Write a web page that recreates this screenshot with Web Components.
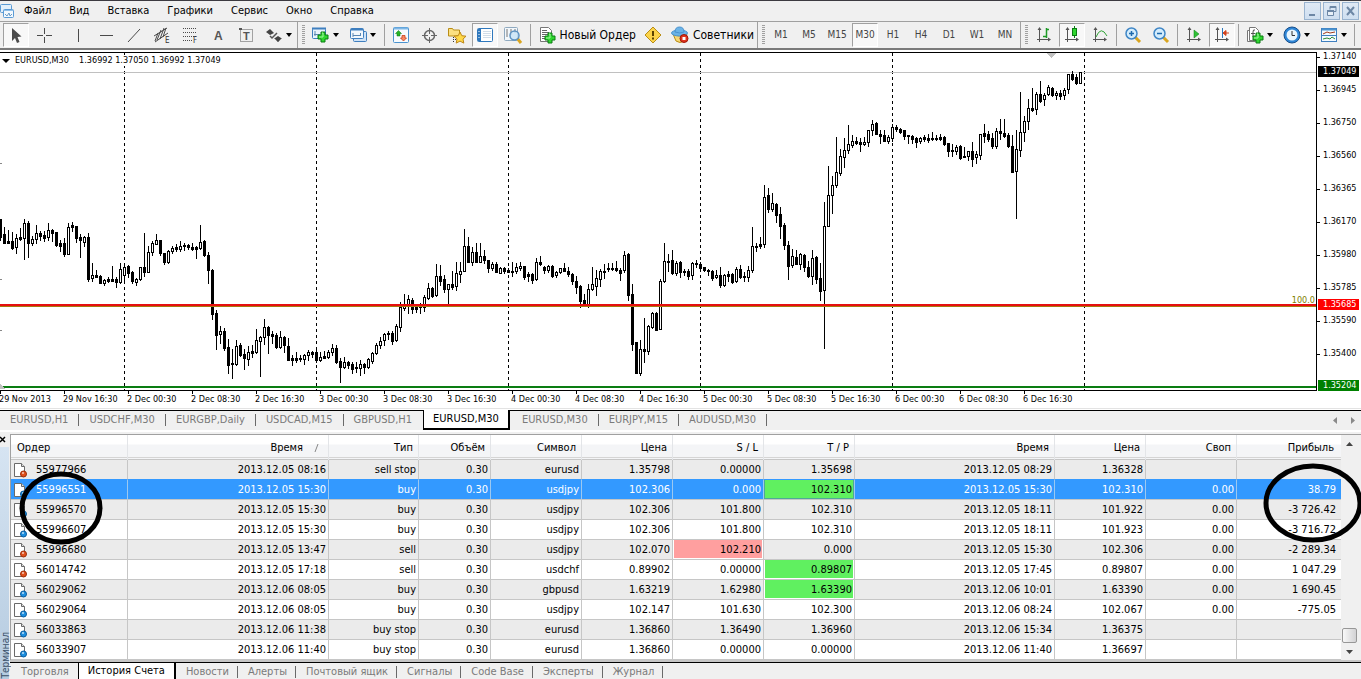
<!DOCTYPE html>
<html lang="ru">
<head>
<meta charset="utf-8">
<title>EURUSD,M30</title>
<style>
  html, body { margin: 0; padding: 0; background: #f0f0f0; }
  body { font: 11px/14px "DejaVu Sans Condensed", "Noto Sans", sans-serif; color: #000; overflow-x: hidden; }
</style>
</head>
<body>
<mt-app></mt-app>

<script>
const NS = (w, h, body) => `<svg width="${w}" height="${h}" viewBox="0 0 ${w} ${h}" aria-hidden="true">${body}</svg>`;
const plusSign = (x, y) => `<path d="M${x+3} ${y}h4v3h3v4h-3v3h-4v-3h-3v-4h3z" fill="#2fd62f" stroke="#0a7d12"/><path d="M${x+4} ${y+1}h1v4h-4" stroke="#a5f7a0" fill="none"/>`;
const axes = `<path d="M5.5 3v14M3 14.5h13" stroke="#555" fill="none"/><path d="M5.5 2l-2 3h4zM17 14.5l-3-2v4z" fill="#555"/>`;
const ICONS = {
  cursor: NS(20, 20, `<path d="M6 3v13l3-3 2 5 2.500-1-2-5 4-.500z" fill="#4a4a4a"/>`),
  cross: NS(20, 20, `<path d="M10.500 3v6M10.500 12v6M3 10.500h6M12 10.500h6" stroke="#4a4a4a"/>`),
  vline: NS(20, 20, `<path d="M10.500 4v13" stroke="#4a4a4a"/>`),
  hline: NS(20, 20, `<path d="M4 10.500h13" stroke="#4a4a4a"/>`),
  diag: NS(20, 20, `<path d="M4 17L16 4" stroke="#4a4a4a"/>`),
  channel: NS(20, 20, `<path d="M2 11L15 3M3 17L16 8M5 15L9 5M8 14L12 3M11 12L14 3M3 16L6 8" stroke="#4a4a4a" fill="none"/><text x="13" y="18" font-size="8" fill="#333">E</text>`),
  fib: NS(20, 20, `<path d="M3 3.500h14M3 7.500h14M3 11.500h14M3 15.500h9" stroke="#4a4a4a" stroke-dasharray="1 1"/><text x="13" y="18" font-size="8" fill="#333">F</text>`),
  letterA: NS(20, 20, `<text x="6" y="15" font-size="12" font-weight="bold" fill="#555" font-family="Liberation Sans">A</text>`),
  letterT: NS(20, 20, `<rect x="4.500" y="4.500" width="12" height="12" fill="none" stroke="#555" stroke-dasharray="1 1"/><path d="M3 3h3v2h-3z" fill="#555"/><text x="7" y="15" font-size="11" font-weight="bold" fill="#555" font-family="Liberation Sans">T</text>`),
  arrows: NS(20, 20, `<path d="M6 4l4 4-4 2-4-3zM14 17l-4-4h8z" fill="#444"/><path d="M6 11l2 2 5-5" stroke="#555" stroke-width="1.500" fill="none"/><path d="M14 11l3 2-3 4-3-4z" fill="#444"/>`),
  newchart: NS(20, 20, `<rect x="1.500" y="3.500" width="13" height="10" rx="1" fill="#e9f3fc" stroke="#3f7fbf"/><path d="M1 3.500h14" stroke="#3f7fbf" stroke-width="2"/><path d="M4 6v5M3 9.500h6" stroke="#5b87b3"/>${plusSign(7, 7)}`),
  profiles: NS(20, 20, `<rect x="5.500" y="6.500" width="13" height="10" rx="1" fill="#cfe2f5" stroke="#3f7fbf"/><rect x="2.500" y="3.500" width="13" height="10" rx="1" fill="#f2f8fd" stroke="#3f7fbf"/><path d="M3 4.500h12" stroke="#3f7fbf" stroke-width="2"/><path d="M5 8v4M5 10.500h8M12.500 8v3" stroke="#5b87b3"/>`),
  market: NS(20, 20, `<rect x="2.500" y="2.500" width="15" height="15" rx="1" fill="#f7fbff" stroke="#4b93cf"/><path d="M3 3.500h14" stroke="#7db7e6" stroke-width="2"/><path d="M7.500 5.500l3 3h-1.500v2.500h-3v-2.500h-1.500z" fill="#28b428" stroke="#0b7a12" stroke-width=".5"/><path d="M12.500 16l-3-3h1.500v-2.500h3v2.500h1.500z" fill="#f88a64" stroke="#c8401a" stroke-width=".8"/>`),
  target: NS(20, 20, `<circle cx="10.500" cy="10.500" r="5" fill="none" stroke="#666" stroke-width="1.500"/><path d="M10.500 3v6M10.500 12v6M3 10.500h6M12 10.500h6" stroke="#666"/>`),
  navigator: NS(20, 20, `<path d="M1.500 3.500h4l1 1.500h6v6h-11z" fill="#fbe081" stroke="#b98d16"/><path d="M6.500 12v6M6 14.500h4" stroke="#333" stroke-dasharray="1 1"/><path d="M13 7l1.800 3.700 4.200.500-3 2.900.800 4-3.800-2-3.800 2 .800-4-3-2.900 4.200-.500z" fill="#ffd94a" stroke="#bd8716"/>`),
  terminal: NS(20, 20, `<rect x="2.500" y="3.500" width="15" height="13" rx="1" fill="#fff" stroke="#2f78bd"/><path d="M3 4h3v12h-3z" fill="#2f78bd"/><path d="M4 6v1M4 9v1M4 12v1" stroke="#fff"/><path d="M8 6.500h8M8 8.500h8M8 10.500h8M8 12.500h8" stroke="#d2dde8"/>`),
  tester: NS(20, 20, `<rect x="1.500" y="2.500" width="13" height="13" rx="1" fill="#f2f7fb" stroke="#8fa9bf"/><path d="M4 4v8M8 4v6M12 4v4" stroke="#777"/><path d="M14 13l4 5" stroke="#d9a520" stroke-width="3"/><circle cx="11.500" cy="10.500" r="4.500" fill="#c7e4f8cc" stroke="#5d93c2" stroke-width="1.500"/>`),
  order: NS(20, 20, `<path d="M3.500 2.500h8l3 3v11h-11z" fill="#fff" stroke="#777"/><path d="M5 5.500h5M5 7.500h7M5 9.500h7M5 11.500h4M5 13.500h4" stroke="#666"/>${plusSign(8, 8)}`),
  alert: NS(20, 20, `<path d="M10 2l8 8-8 8-8-8z" fill="#fbd34a" stroke="#b98d16" stroke-linejoin="round"/><path d="M10 6v5M10 12.500v2" stroke="#5b4200" stroke-width="2"/>`),
  experts: NS(20, 20, `<path d="M3 9q7 4 14 0l-3 7q-4 3-8 0z" fill="#f7d774" stroke="#b98d16"/><ellipse cx="9.500" cy="8" rx="8" ry="3" fill="#6bb3e6" stroke="#4b93cf"/><path d="M5 7q0-5 4.500-5t4.500 5q-4 2-9 0z" fill="#6bb3e6" stroke="#4b93cf"/><circle cx="14" cy="13.500" r="4" fill="#e0331c" stroke="#9d1708"/><rect x="12.500" y="12" width="3" height="3" fill="#fff"/>`),
  bars: NS(20, 20, `${axes}<path d="M9 11.500h3M12.500 3v10M12 4.500h3" stroke="#1d9a26" stroke-width="1.500" fill="none"/>`),
  candles: NS(20, 20, `${axes}<path d="M12.500 1v12" stroke="#0a7d12"/><rect x="10.500" y="3.500" width="4" height="7" fill="#2fd62f" stroke="#0a7d12"/>`),
  line: NS(20, 20, `${axes}<path d="M6 12q5-12 11-1" stroke="#2fa336" fill="none"/>`),
  zoomin: NS(20, 20, `<path d="M12 12l5 5" stroke="#d9a520" stroke-width="3"/><circle cx="8.500" cy="8.500" r="5.500" fill="#d3ecfc" stroke="#3f86c6" stroke-width="1.500"/><path d="M8.500 6v5M6 8.500h5" stroke="#1d69ad" stroke-width="1.500"/>`),
  zoomout: NS(20, 20, `<path d="M12 12l5 5" stroke="#d9a520" stroke-width="3"/><circle cx="8.500" cy="8.500" r="5.500" fill="#d3ecfc" stroke="#3f86c6" stroke-width="1.500"/><path d="M6 8.500h5" stroke="#1d69ad" stroke-width="1.500"/>`),
  autoscroll: NS(20, 20, `${axes}<path d="M10 5l5 4-5 4z" fill="#2fc236" stroke="#0a7d12" stroke-width=".5"/>`),
  shift: NS(20, 20, `${axes}<path d="M10.500 3v10" stroke="#2f78bd"/><path d="M11 8l3-2.500v5zM14 8h3" fill="#d2421c" stroke="#d2421c"/>`),
  indicators: NS(20, 20, `<path d="M2.500 5.500h8v11h-8z" fill="#fff" stroke="#777"/><path d="M4.500 2.500h6l3 3v10h-9z" fill="#fff" stroke="#777"/><path d="M10 5q-2-1-2 2v5M6 8.500h4" stroke="#555" fill="none"/>${plusSign(8, 8)}`),
  clock: NS(20, 20, `<circle cx="10" cy="10" r="8" fill="#2f86d6" stroke="#174f8c"/><circle cx="10" cy="10" r="5.500" fill="#e9f5fd"/><path d="M10 6v4.500h3" stroke="#333" fill="none"/>`),
  template: NS(20, 20, `<rect x="2.500" y="3.500" width="15" height="13" fill="#f4faff" stroke="#3f7fbf"/><path d="M3 4.500h14" stroke="#4b93cf" stroke-width="2"/><path d="M3 10.500h14" stroke="#3f7fbf"/><path d="M4 9l4-2 3 1 5-1" stroke="#a23c1c" fill="none"/><path d="M4 14l4-1 3 1 2-2 3 2" stroke="#2f8a36" fill="none"/>`),
};

const define = (name, html, setup) => {
  const template = document.createElement('template');
  template.innerHTML = html;
  customElements.define(name, class extends HTMLElement {
    constructor() {
      super();
      this.attachShadow({ mode: 'open' }).append(template.content.cloneNode(true));
    }
    connectedCallback() { if (setup && !this.ready) { this.ready = true; setup(this, this.shadowRoot); } }
  });
};

/* ---------- menu bar ---------- */
define('mt-menu-bar', `
<style>
  :host { display: flex; align-items: center; height: 20px; border-top: 1px solid #3c3a40; border-bottom: 1px solid #a0a0a0; background: #f0f0f0; }
  svg { display: block; }
  nav { display: flex; flex: 1; }
  nav button { border: 0; background: none; padding: 0 9px; font: inherit; color: inherit; }
  .win { display: flex; gap: 2px; padding-right: 2px; }
  .win button { width: 17px; height: 18px; padding: 0; border: 1px solid #9ab4d0; background: linear-gradient(#dfe9f5, #cfdff0); }
</style>
${NS(15, 16, `<rect x=".5" y="1.500" width="11" height="8" rx="1" fill="#e3f0fb" stroke="#5b9bd5"/><rect x="3.500" y="6.500" width="10" height="8" rx="1" fill="#f3f9fe" stroke="#5b9bd5"/><path d="M4 7.500h9" stroke="#8fbfe8"/><path d="M5 11l2 2 2-3 1 3 2-2" stroke="#6a9cc8" fill="none"/>`)}
<nav aria-label="Меню">
  <button>Файл</button><button>Вид</button><button>Вставка</button><button>Графики</button><button>Сервис</button><button>Окно</button><button>Справка</button>
</nav>
<div class="win">
  <button aria-label="Свернуть">${NS(15, 16, '<path d="M4 11h6v2h-6z" fill="#6d87a5"/>')}</button>
  <button aria-label="Восстановить">${NS(15, 16, '<path d="M6 6.500v-3h6v5h-2" fill="none" stroke="#6d87a5"/><path d="M6 4h6" stroke="#6d87a5" stroke-width="2"/><path d="M3.500 7.500h6v5h-6z" fill="#e8f0f8" stroke="#6d87a5"/><path d="M3 8h7" stroke="#6d87a5" stroke-width="2"/>')}</button>
  <button aria-label="Закрыть">${NS(15, 16, '<path d="M4 4l7 8M11 4l-7 8" stroke="#6d87a5" stroke-width="2"/>')}</button>
</div>`);

/* ---------- toolbar button ---------- */
define('mt-tool', `
<style>
  :host { display: flex; }
  button { box-sizing: border-box; display: flex; align-items: center; justify-content: center; min-width: 26px; height: 24px; margin: 0 1px; padding: 0; border: 1px solid transparent; background: none; font: inherit; font-size: 12px; color: #000; white-space: nowrap; }
  :host([pressed]) button { border-color: #a0a0a0 #fff #fff #a0a0a0; background: #f8f8f8; }
  :host([period]) button { color: #444; font-size: 10px; }
  :host([labelled]) button { gap: 3px; padding: 0 1px; }
  svg { display: block; flex: none; }
  .tri { width: 0; border: 3px solid transparent; border-top: 4px solid #000; border-bottom: 0; margin: 0 4px 0 2px; }
  :host([menu]) button { margin-right: 0; padding-left: 2px; }
</style>
<button><slot></slot></button>`, (el, root) => {
  const button = root.querySelector('button');
  const icon = el.getAttribute('icon');
  if (icon) { button.insertAdjacentHTML('afterbegin', ICONS[icon]); button.setAttribute('aria-label', el.textContent || icon); }
  if (el.hasAttribute('menu')) button.insertAdjacentHTML('beforeend', '<span class="tri"></span>');
});

define('mt-sep', `<style>:host { display: block; width: 1px; height: 22px; margin: 0 var(--sep-gap, 3px); background: #a0a0a0; }</style>`);
define('mt-grip', `<style>
  :host { display: block; width: 8px; height: 26px; border-left: 1px solid #a0a0a0; padding-left: 4px; box-sizing: border-box; margin-right: 2px; }
  div { width: 3px; height: 20px; margin-top: 3px; background: repeating-linear-gradient(#a0a0a0 0 1px, #f0f0f0 1px 2px); }
</style><div></div>`);

define('mt-toolbar', `
<style>
  :host { display: flex; align-items: center; height: 26px; border-bottom: 2px solid #7a7a7a; padding-left: 2px; background: #f0f0f0; }
  .group { display: flex; align-items: center; }
  .draw { width: 295px; } .main { width: 460px; } .periods { width: 263px; }
  .view { flex: 1; --sep-gap: 2px; }
</style>
<div class="group draw">
  <mt-tool icon="cursor" pressed></mt-tool><mt-tool icon="cross"></mt-tool><mt-sep></mt-sep>
  <mt-tool icon="vline"></mt-tool><mt-tool icon="hline"></mt-tool><mt-tool icon="diag"></mt-tool><mt-tool icon="channel"></mt-tool><mt-tool icon="fib"></mt-tool><mt-tool icon="letterA"></mt-tool><mt-tool icon="letterT"></mt-tool><mt-tool icon="arrows" menu></mt-tool>
</div>
<div class="group main">
  <mt-grip></mt-grip><mt-tool icon="newchart" menu></mt-tool><mt-tool icon="profiles" menu></mt-tool><mt-sep></mt-sep>
  <mt-tool icon="market"></mt-tool><mt-tool icon="target"></mt-tool><mt-tool icon="navigator"></mt-tool><mt-tool icon="terminal" pressed></mt-tool><mt-tool icon="tester"></mt-tool><mt-sep></mt-sep>
  <mt-tool icon="order" labelled>Новый Ордер</mt-tool><mt-tool icon="alert"></mt-tool><mt-tool icon="experts" labelled>Советники</mt-tool>
</div>
<div class="group periods">
  <mt-grip></mt-grip><mt-tool period>M1</mt-tool><mt-tool period>M5</mt-tool><mt-tool period>M15</mt-tool><mt-tool period pressed>M30</mt-tool><mt-tool period>H1</mt-tool><mt-tool period>H4</mt-tool><mt-tool period>D1</mt-tool><mt-tool period>W1</mt-tool><mt-tool period>MN</mt-tool>
</div>
<div class="group view">
  <mt-grip></mt-grip><mt-tool icon="bars"></mt-tool><mt-tool icon="candles" pressed></mt-tool><mt-tool icon="line"></mt-tool><mt-sep></mt-sep>
  <mt-tool icon="zoomin"></mt-tool><mt-tool icon="zoomout"></mt-tool><mt-sep></mt-sep>
  <mt-tool icon="autoscroll"></mt-tool><mt-tool icon="shift" pressed></mt-tool><mt-sep></mt-sep>
  <mt-tool icon="indicators" menu></mt-tool><mt-tool icon="clock" menu></mt-tool><mt-tool icon="template" menu></mt-tool><mt-sep></mt-sep>
</div>`);

/* ---------- chart ---------- */
/* One bar per entry: high, body top, body bottom, low as chart rows; a leading "-" marks a falling bar. */
const BARS = `-219 219 237 240,-227 234 243 243,-230 241 243 243,-232 241 248 249,234 238 247 253,-228 237 239 240,219 223 238 259,-221 223 243 257,236 239 243 245,225 233 239 243,-231 233 236 240,-231 235 238 241,223 230 237 240,-229 230 233 241,-232 232 245 246,-240 243 246 251,-238 243 254 256,223 227 254 254,-222 225 227 231,-226 226 238 242,-234 237 240 257,236 237 242 246,-233 237 279 281,263 275 278 281,-270 275 277 277,-275 276 283 283,279 280 283 285,-277 279 281 282,-266 279 281 281,-277 279 282 287,263 269 282 283,265 267 275 280,-265 266 273 277,-271 272 281 283,278 279 282 285,267 267 279 280,-233 267 272 276,246 252 272 272,241 243 252 255,234 240 244 244,-240 240 253 255,-253 253 262 264,250 251 262 263,246 248 251 253,-244 247 249 251,241 246 249 251,-243 245 246 250,-244 245 247 249,-243 247 249 250,-246 247 249 258,225 242 248 249,-240 241 255 256,-252 255 270 283,-269 270 314 319,-310 313 335 349,326 331 334 343,-328 331 348 350,-339 347 365 373,-349 363 364 378,340 346 364 365,-343 345 355 356,-349 354 358 369,346 352 359 365,-345 351 353 357,329 340 352 353,336 337 341 376,319 327 337 344,-326 327 335 353,-331 334 336 343,-333 335 347 348,331 337 347 348,-336 337 345 352,-338 346 360 360,-355 358 360 365,-352 358 360 362,-355 358 359 361,354 355 359 364,350 352 355 360,-351 352 354 357,-347 352 360 362,352 357 360 361,-351 356 358 358,350 352 357 358,344 348 352 355,-345 348 362 363,-358 361 367 382,357 362 367 368,-361 362 365 368,-362 364 369 373,-362 367 368 372,360 364 368 375,-363 364 367 373,358 359 367 368,352 353 361 363,343 345 353 354,337 341 345 348,333 334 340 345,-331 333 334 339,-331 333 341 344,324 326 340 341,302 307 327 331,294 305 308 310,295 299 305 313,-298 300 309 313,-305 306 309 312,-303 305 307 313,295 297 307 311,283 288 298 299,-287 288 296 297,264 276 295 296,-265 276 281 285,-275 279 289 292,284 284 289 304,-271 284 287 289,262 273 286 290,262 271 274 282,229 246 271 271,-237 246 262 262,247 252 262 265,-243 252 262 262,243 256 262 262,-250 256 260 263,-260 260 268 272,262 264 268 270,-262 264 272 272,267 268 273 273,-267 268 271 273,-268 270 272 272,-262 271 272 276,263 267 271 273,262 266 268 270,-266 266 277 279,-272 274 276 281,-273 274 280 283,258 262 279 280,-256 262 264 265,-266 267 270 273,265 266 270 272,-265 266 276 277,271 272 275 277,268 268 272 273,-263 268 271 271,-267 271 274 276,-273 274 281 284,-276 281 287 293,-285 286 301 307,-294 300 305 306,284 289 304 307,267 284 289 290,270 278 286 295,269 271 279 286,-264 271 272 278,-263 268 269 271,-263 268 269 270,-261 268 270 271,-268 270 273 280,251 255 270 272,-253 254 295 300,-284 294 344 350,-342 342 373 373,340 349 373 375,-318 349 351 362,325 326 351 354,312 313 327 328,-312 313 330 330,279 281 329 329,243 261 281 282,-254 261 262 271,-250 260 273 274,261 263 273 275,-261 262 272 277,-269 271 272 275,-269 271 276 279,262 263 275 279,-260 263 264 267,-262 264 268 268,-267 267 270 271,-269 270 271 275,-270 271 278 280,270 275 277 278,-267 275 285 287,274 275 285 286,-271 274 276 281,-273 274 282 283,267 269 281 282,-265 269 277 278,-272 276 277 281,266 270 277 281,227 246 270 272,-243 246 247 251,-237 244 246 248,185 197 244 247,-188 195 209 212,193 203 209 211,-203 204 215 222,-207 214 226 238,-223 225 245 249,-241 245 266 279,249 256 265 267,-250 257 264 264,253 254 264 269,-254 255 267 271,-261 267 276 277,250 258 276 284,-256 257 279 283,-263 278 291 300,202 226 290 348,166 195 226 226,176 185 195 213,137 172 185 187,149 156 173 175,138 150 157 167,125 144 150 153,135 141 145 147,-137 141 143 144,-138 142 144 151,137 142 144 145,130 130 142 146,120 124 130 135,-122 123 134 134,-130 134 136 143,-130 135 141 141,135 137 141 143,124 127 138 141,-125 127 129 131,-128 129 132 133,-130 130 136 139,-135 135 136 143,-135 136 139 143,-137 138 142 147,137 138 141 143,-135 137 139 141,-134 138 140 142,-132 138 139 140,-135 138 139 140,-134 137 139 140,-136 137 144 145,-143 143 151 156,-144 150 151 156,145 147 151 154,-145 146 158 159,-147 156 157 157,151 151 156 160,-142 151 159 166,151 154 157 163,134 134 155 159,-124 133 136 142,-131 134 139 141,-133 138 146 148,128 131 146 148,-119 131 133 139,-119 133 136 137,-133 135 146 147,-135 146 172 172,130 149 171 218,92 132 150 156,116 121 132 141,99 108 121 129,-88 108 110 111,92 94 109 114,-81 94 101 102,93 95 99 105,85 87 94 95,-87 88 95 96,91 93 95 99,-90 93 96 99,88 90 95 99,74 74 89 93,-71 74 79 80,-74 77 83 84,72 72 83 83`;
const TOP = 53;

define('mt-chart', `
<style>
  :host { display: grid; grid-template-columns: minmax(0, 1fr) 44px; border-top: 2px solid #fff; border-bottom: 1px solid #e3e3e3; background: #fff; font-size: 9px; line-height: 11px; }
  .plot { position: relative; box-sizing: border-box; height: 339px; border: 1px solid #000; border-left: 0; overflow: hidden; }
  .plot svg { display: block; width: 100%; height: 337px; shape-rendering: crispEdges; }
  .title { position: absolute; left: 2px; top: 2px; display: flex; align-items: center; gap: 5px; white-space: pre; }
  .title i { border: 4px solid transparent; border-top: 4px solid #000; border-bottom: 0; }
  .title span { background: #fff; }
  .level { position: absolute; right: 1px; top: 242px; color: #808000; }
  .prices { position: relative; overflow: hidden; height: 339px; }
  .prices ol { list-style: none; margin: -12px 0 0; padding: 0; }
  .prices li { line-height: 33px; padding-left: 6px; background: linear-gradient(#000, #000) 0 17px / 3px 1px no-repeat; }
  .prices b { position: absolute; left: 1px; right: 2px; padding-left: 5px; font-weight: normal; color: #fff; }
  .times { display: flex; height: 17px; overflow: hidden; margin-left: -1px; }
  .times span { flex: none; width: 64px; line-height: 17px; white-space: nowrap; background: linear-gradient(#000, #000) 1px 0 / 1px 3px no-repeat; }
</style>
<div class="plot">
  <svg></svg>
  <div class="title"><i></i><span>EURUSD,M30    1.36992 1.37050 1.36992 1.37049</span></div>
  <span class="level">100.0</span>
</div>
<div class="prices">
  <ol></ol>
  <b style="top:14px;background:#000">1.37049</b>
  <b style="top:247px;background:#f00">1.35685</b>
  <b style="top:328px;background:#008000">1.35204</b>
</div>
<div class="times"></div>`, (el, root) => {
  let s = '';
  for (let x = 124; x < 1100; x += 192) s += `<path d="M${x}.5 0V337" stroke="#000" stroke-dasharray="3 3"/>`;
  s += `<path d="M1046 0h11l-5.500 5z" fill="#c0c0c0"/><rect y="${72 - TOP}" width="100%" height="1" fill="#c0c0c0"/>`;
  BARS.split(',').forEach((bar, i) => {
    const down = bar[0] === '-';
    const [h, t, b, l] = bar.replace('-', '').split(' ').map(v => v - TOP);
    const x = i * 4;
    s += `<rect x="${x}" y="${h}" width="1" height="${l - h + 1}"/><rect x="${x - 1}" y="${t}" width="3" height="${b - t + 1}"/>`;
    if (!down && b - t > 1) s += `<rect x="${x}" y="${t + 1}" width="1" height="${b - t - 1}" fill="#fff"/>`;
  });
  s += `<rect y="${304 - TOP}" width="100%" height="2" fill="#e60f0f"/><rect y="${306 - TOP}" width="100%" height="1" fill="#a87a10"/>`;
  s += `<rect y="${386 - TOP}" width="100%" height="2" fill="#0a7d12"/><path d="M0 ${384 - TOP}l5 5h-5z" fill="#c0c0c0"/>`;
  s += `<path d="M0 ${279 - TOP}.5h2M0 ${330 - TOP}.5h2M0 ${163 - TOP}.5h2" stroke="#888"/>`;
  root.querySelector('svg').innerHTML = s;
  root.querySelector('ol').innerHTML = ['1.37140','1.36945','1.36750','1.36560','1.36365','1.36170','1.35980','1.35785','1.35590','1.35400'].map(p => `<li>${p}</li>`).join('');
  root.querySelector('.times').innerHTML = ['29 Nov 2013','29 Nov 16:30','2 Dec 00:30','2 Dec 08:30','2 Dec 16:30','3 Dec 00:30','3 Dec 08:30','3 Dec 16:30','4 Dec 00:30','4 Dec 08:30','4 Dec 16:30','5 Dec 00:30','5 Dec 08:30','5 Dec 16:30','6 Dec 00:30','6 Dec 08:30','6 Dec 16:30'].map(t => `<span>${t}</span>`).join('');
});

/* ---------- tabs ---------- */
define('mt-tab', `
<style>
  :host { display: block; }
  :host([active]) { margin-right: var(--active-gap, 2px); }
  button { box-sizing: border-box; display: block; border: 0; background: none; font: inherit; color: #7a7a7a; padding: 0 var(--tab-end, 11px) 0 10px; height: var(--tab-height, 18px); white-space: nowrap; position: relative; }
  button::after { content: ""; position: absolute; right: 0; top: 3px; width: 1px; height: 12px; background: #6a6a6a; }
  :host([active]) button { background: #fff; color: #000; border: solid #000; border-width: 0 2px 2px 1px; padding: 0 9px; margin-top: -1px; height: calc(var(--tab-height, 18px) + 2px); }
  :host([active]) button::after, :host([last-before]) button::after { display: none; }
</style>
<button role="tab"><slot></slot></button>`);
define('mt-tabs', `
<style>
  :host { display: flex; align-items: flex-start; border-top: 1px solid #000; background: #f0f0f0; }
  .list { display: flex; flex: 1; padding-right: 8px; }
</style>
<div class="list" role="tablist"><slot></slot></div><slot name="end"></slot>`);
define('mt-scroll-arrows', `
<style>
  :host { display: flex; }
  button { border: 0; background: none; padding: 0; width: 17px; height: 18px; }
  svg { display: block; margin: 0 auto; }
</style>
<button aria-label="Назад">${NS(9, 9, '<path d="M6 1v7L2 4.500z" fill="#8a8a8a"/>')}</button><button aria-label="Вперёд">${NS(9, 9, '<path d="M3 1v7l4-3.500z" fill="#8a8a8a"/>')}</button>`);

/* ---------- order history ---------- */
const ROWS = [
  ['r','55977966','2013.12.05 08:16','sell stop','0.30','eurusd','1.35798','0.00000','1.35698','2013.12.05 08:29','1.36328','',''],
  ['b','55996551','2013.12.05 15:30','buy','0.30','usdjpy','102.306','0.000','+102.310','2013.12.05 15:30','102.310','0.00','38.79'],
  ['b','55996570','2013.12.05 15:30','buy','0.30','usdjpy','102.306','101.800','102.310','2013.12.05 18:11','101.922','0.00','-3 726.42'],
  ['b','55996607','2013.12.05 15:30','buy','0.30','usdjpy','102.306','101.800','102.310','2013.12.05 18:11','101.923','0.00','-3 716.72'],
  ['r','55996680','2013.12.05 13:47','sell','0.30','usdjpy','102.070','!102.210','0.000','2013.12.05 15:30','102.306','0.00','-2 289.34'],
  ['r','56014742','2013.12.05 17:18','sell','0.30','usdchf','0.89902','0.00000','+0.89807','2013.12.05 17:45','0.89807','0.00','1 047.29'],
  ['b','56029062','2013.12.06 08:05','buy','0.30','gbpusd','1.63219','1.62980','+1.63390','2013.12.06 10:01','1.63390','0.00','1 690.45'],
  ['b','56029064','2013.12.06 08:05','buy','0.30','usdjpy','102.147','101.630','102.300','2013.12.06 08:24','102.067','0.00','-775.05'],
  ['b','56033863','2013.12.06 11:38','buy stop','0.30','eurusd','1.36860','1.36490','1.36960','2013.12.06 15:34','1.36375','',''],
  ['b','56033907','2013.12.06 11:40','buy stop','0.30','eurusd','1.36860','0.00000','0.00000','2013.12.06 11:40','1.36697','',''],
];
define('mt-history', `
<style>
  :host { display: block; }
  table { width: 100%; table-layout: fixed; border-collapse: separate; border-spacing: 0; }
  th, td { box-sizing: border-box; padding: 0 2px 0 0; text-align: right; white-space: nowrap; overflow: hidden; }
  th { height: 25px; font-weight: normal; padding-right: 5px; background: linear-gradient(#fff 0 9px, #f4f5f7 10px, #f4f5f7 22px, #d5d5d5 22px 23px, #f4f5f7 23px 24px, #c6c6c6 24px); border-right: 1px solid #e3e5e8; }
  th:first-child { text-align: left; padding-left: 6px; }
  th.sorted { padding-right: 8px; }
  th.sorted svg { display: inline-block; margin-left: 11px; vertical-align: -2px; }
  td { height: 20px; border-right: 1px solid #c6c6c6; border-bottom: 1px solid #c6c6c6; background: #fff; }
  tr:nth-child(odd) td { background: #ebebeb; }
  td:last-child, th:last-child { border-right: 0; padding-right: 5px; }
  th:last-child { padding-right: 7px; }
  td:first-child { text-align: left; }
  td:first-child div { display: flex; align-items: center; gap: 7px; padding-left: 2px; }
  td svg { display: block; }
  tr.before td { border-bottom-color: #3399ff; }
  tr.selected td { background: #3399ff; color: #fff; border-right-color: #9cc8f0; }
  tr td.tp, tr.selected td.tp { background: #60f060; color: #000; box-shadow: inset 1px 0 #fff, inset -1px -1px #fff; }
  tr.selected td.tp { box-shadow: inset 1px 0 #4fa898, inset -1px -1px #4fa898; }
  tr td.sl { background: #ff9f9f; box-shadow: inset 1px 0 #fff, inset -1px -1px #fff; }
</style>
<table>
  <colgroup><col style="width:117px"><col style="width:201px"><col style="width:90px"><col style="width:72px"><col style="width:91px"><col style="width:91px"><col style="width:91px"><col style="width:91px"><col style="width:200px"><col style="width:91px"><col style="width:91px"><col></colgroup>
  <thead><tr><th>Ордер</th><th class="sorted">Время${NS(6, 10, '<path d="M1 9L4 1" stroke="#888"/>')}</th><th>Тип</th><th>Объём</th><th>Символ</th><th>Цена</th><th>S / L</th><th>T / P</th><th>Время</th><th>Цена</th><th>Своп</th><th>Прибыль</th></tr></thead>
  <tbody></tbody>
</table>`, (el, root) => {
  const doc = kind => NS(16, 16, `<path d="M1.500 1.500h7l3 3v10h-10z" fill="#fff" stroke="#6a6a6a"/><path d="M8.500 1.500v3h3" fill="#ddd" stroke="#6a6a6a"/><circle cx="10.500" cy="12" r="3" fill="${kind === 'r' ? '#e0501c' : '#1d8fe0'}" stroke="${kind === 'r' ? '#9d2d08' : '#0b5c9d'}"/><circle cx="10" cy="11" r="1" fill="#fff" opacity=".7"/>`);
  root.querySelector('tbody').innerHTML = ROWS.map(([kind, id, ...rest], i) =>
    `<tr class="${i === 0 ? 'before' : i === 1 ? 'selected' : ''}"><td><div>${doc(kind)}<span>${id}</span></div></td>` +
    rest.map(v => v[0] === '+' ? `<td class="tp">${v.slice(1)}</td>` : v[0] === '!' ? `<td class="sl">${v.slice(1)}</td>` : `<td>${v}</td>`).join('') + '</tr>').join('');
});

define('mt-scrollbar', `
<style>
  :host { display: flex; flex-direction: column; width: 17px; background: #f0f0f0; }
  button { border: 0; padding: 0; background: none; height: 17px; }
  svg { display: block; margin: 0 auto; }
  .track { flex: 1; display: flex; flex-direction: column; justify-content: flex-end; }
  .thumb { box-sizing: border-box; width: 15px; height: 15px; margin-left: 1px; border: 1px solid #979797; border-radius: 2px; background: linear-gradient(90deg, #f8f8f8, #d2d2d4); }
</style>
<button aria-label="Вверх">${NS(9, 7, '<path d="M1 6l3.500-4L8 6z" fill="#444"/>')}</button>
<div class="track"><div class="thumb"></div></div>
<button aria-label="Вниз">${NS(9, 7, '<path d="M1 2l3.500 4L8 2z" fill="#444"/>')}</button>`);

define('mt-terminal', `
<style>
  :host { display: grid; grid-template-columns: 10px minmax(0, 1fr); position: relative; overflow: hidden; margin-top: 2px; }
  .side { display: flex; flex-direction: column; }
  .side button { border: 0; background: none; padding: 0; height: 13px; }
  .side svg { display: block; }
  .strip { flex: 1; display: flex; flex-direction: column; justify-content: flex-end; width: 9px; background: linear-gradient(#d6e4f2, #b5cbe0); }
  .strip span { writing-mode: vertical-rl; transform: rotate(180deg); font-size: 10px; line-height: 10px; margin-left: 1px; color: #3a5068; white-space: nowrap; }
  .frame { display: flex; border-top: 1px solid #a0a0a0; border-left: 1px solid #a0a0a0; padding-right: 3px; }
  mt-history { flex: 1; min-width: 0; }
  .edge { height: 2px; background: #c6c6c6; }
  mt-tabs { --tab-end: 9px; --active-gap: 0px; height: 16px; overflow: clip; padding-left: 1px; }
  .mark { position: absolute; overflow: visible; fill: none; stroke: #000; }
</style>
<div class="side"><button aria-label="Закрыть">${NS(8, 13, '<path d="M0 3l5 5M5 3l-5 5" stroke="#000" stroke-width="1.500"/>')}</button><div class="strip"><span>Терминал</span></div></div>
<div class="main">
  <div class="frame"><mt-history></mt-history><mt-scrollbar></mt-scrollbar></div>
  <div class="edge"></div>
  <mt-tabs>
    <mt-tab last-before>Торговля</mt-tab><mt-tab active>История Счета</mt-tab><mt-tab>Новости</mt-tab><mt-tab>Алерты</mt-tab><mt-tab>Почтовый ящик</mt-tab><mt-tab>Сигналы</mt-tab><mt-tab>Code Base</mt-tab><mt-tab>Эксперты</mt-tab><mt-tab>Журнал</mt-tab>
  </mt-tabs>
</div>
<svg class="mark" style="left:19px;top:37px" width="84" height="74" aria-hidden="true"><ellipse cx="42" cy="37" rx="39" ry="34" stroke-width="5"/></svg>
<svg class="mark" style="right:-2px;top:30px" width="100" height="80" aria-hidden="true"><ellipse cx="50" cy="39" rx="47" ry="37" stroke-width="5"/></svg>`);

define('mt-app', `
<style>
  :host { display: block; }
  .charts { border-bottom: 2px solid #fff; }
  .gap { height: 1px; background: #fff; }
</style>
<mt-menu-bar></mt-menu-bar>
<mt-toolbar></mt-toolbar>
<mt-chart></mt-chart>
<div class="gap"></div>
<mt-tabs class="charts">
  <mt-tab>EURUSD,H1</mt-tab><mt-tab>USDCHF,M30</mt-tab><mt-tab>EURGBP,Daily</mt-tab><mt-tab>USDCAD,M15</mt-tab><mt-tab last-before>GBPUSD,H1</mt-tab><mt-tab active>EURUSD,M30</mt-tab><mt-tab>EURUSD,M30</mt-tab><mt-tab>EURJPY,M15</mt-tab><mt-tab>AUDUSD,M30</mt-tab>
  <mt-scroll-arrows slot="end"></mt-scroll-arrows>
</mt-tabs>
<mt-terminal></mt-terminal>`);
</script>
</body>
</html>
